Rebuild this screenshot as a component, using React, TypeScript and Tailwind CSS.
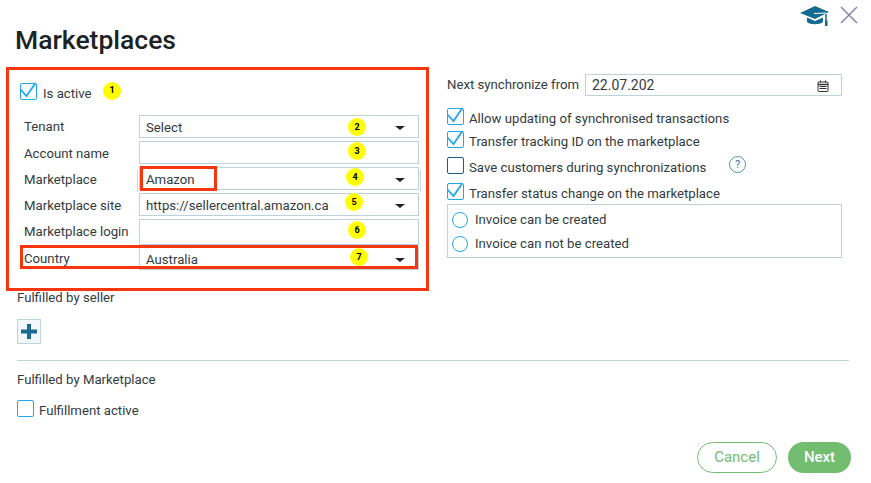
function Check({ checked = true, dark = false }: { checked?: boolean; dark?: boolean }) {
  return (
    <span className={`relative block w-[17px] h-[17px] flex-shrink-0 rounded-[2px] border-[1.5px] ${dark ? 'border-[#1d5f80]' : 'border-[#1fa8ee]'}`}>
      {checked && (
        <svg className="absolute left-[-2px] top-[-2px] overflow-visible" width="17" height="17" viewBox="0 0 17 17" fill="none">
          <path d="M1.5 7.500L7.500 14L16.500 1" stroke="#1fa8ee" strokeWidth="1.8" />
        </svg>
      )}
    </span>
  )
}

function Badge({ n, className }: { n: number; className: string }) {
  return (
    <span className={`absolute w-[18px] h-[18px] rounded-full bg-[#ffff00] text-[9px] font-bold text-black flex items-center justify-center ${className}`}>
      {n}
    </span>
  )
}

function Caret() {
  return <span className="absolute right-[13px] top-[10px] w-0 h-0 border-x-[5px] border-x-transparent border-t-[4px] border-t-[#222]" />
}

function Row({ label, value, caret, children, labelClass = 'mt-[2px]', className = '', inputClass = '' }: { label: string; value?: string; caret?: boolean; children?: React.ReactNode; labelClass?: string; className?: string; inputClass?: string }) {
  return (
    <div className={`flex h-[23px] pl-[6px] ${className}`}>
      <span className={`w-[115px] flex-shrink-0 leading-[22px] ${labelClass}`}>{label}</span>
      <div className={`relative w-[280px] h-[23px] flex-shrink-0 border border-[#bcd3de] px-[6px] leading-[23px] ${inputClass}`}>
        {value}
        {caret && <Caret />}
        {children}
      </div>
    </div>
  )
}

function CheckRow({ label, checked = true, dark = false, className = '' }: { label: string; checked?: boolean; dark?: boolean; className?: string }) {
  return (
    <label className={`flex items-center gap-[5px] h-[17px] ${className}`}>
      <Check checked={checked} dark={dark} />
      <span className="whitespace-nowrap mt-[5px]">{label}</span>
    </label>
  )
}

function Radio({ label }: { label: string }) {
  return (
    <label className="flex items-center gap-[7px] h-[17px] pl-[4px]">
      <span className="block w-[16px] h-[16px] rounded-full border-[1.5px] border-[#1fa8ee]" />
      <span>{label}</span>
    </label>
  )
}

export default function App() {
  return (
    <div className="relative w-[871px] h-[483px] overflow-hidden bg-white px-[17px] text-[13.2px] text-[#333b40] font-['Roboto',sans-serif]">
      <div className="flex justify-end items-center gap-[10px] h-[25px] pt-[5px] -mr-[4px]">
        <svg width="30" height="21" viewBox="0 0 30 21">
          <path d="M0 8L15 1L29 7L15 14Z" fill="#136b8e" />
          <path d="M7 12.500L15 16L23 12.500V17C20 20 10 20 7 17Z" fill="#136b8e" />
          <path d="M14 8.500L26 8V13" fill="none" stroke="#fff" strokeWidth="1" />
          <path d="M26 9V16" stroke="#136b8e" strokeWidth="1.500" />
          <rect x="25" y="15.500" width="2.500" height="5.500" fill="#136b8e" />
        </svg>
        <svg width="18" height="18" viewBox="0 0 18 18" fill="none">
          <path d="M1 1L17 17M17 1L1 17" stroke="#7c8aa8" strokeWidth="1.5" />
        </svg>
      </div>
      <h1 className="text-[26.5px] leading-[30px] font-medium text-[#1b2326] -ml-[2px]">Marketplaces</h1>

      <div className="flex mt-[12px]">
        <div className="relative -ml-[11px] w-[423px] h-[224px] border-[3px] border-[#f5360f] flex-shrink-0 pl-[11px] pt-[13px]">
          <div className="relative">
            <CheckRow label="Is active" className="gap-[6px]" />
            <Badge n={1} className="left-[83px] -top-[1px]" />
          </div>
          <div className="flex flex-col gap-[3px] mt-[15px] -ml-[2px] relative">
            <Row label="Tenant" value="Select" caret labelClass="mt-[1px]">
              <Badge n={2} className="left-[208px] top-[2px]" />
            </Row>
            <Row label="Account name">
              <Badge n={3} className="left-[208px] top-0" />
            </Row>
            <Row label="Marketplace" value="Amazon" caret>
              <Badge n={4} className="left-[206px] top-0" />
              <span className="absolute -left-[3px] top-[2px] h-[22px] w-px bg-[#ccd8de]" />
              <span className="absolute -right-[3px] top-[2px] h-[22px] w-px bg-[#ccd8de]" />
              <span className="absolute left-0 -top-[2px] w-[77px] h-[25px] border-[3px] border-[#f5360f]" />
            </Row>
            <Row label="Marketplace site" value="https://sellercentral.amazon.ca" caret>
              <Badge n={5} className="left-[205px] -top-[1px]" />
            </Row>
            <Row label="Marketplace login" inputClass="h-[26px]">
              <Badge n={6} className="left-[208px] top-[1px]" />
            </Row>
            <Row label="Country" value="Australia" caret labelClass="mt-[1px]" className="mt-[2px] z-10">
              <Badge n={7} className="left-[210px] top-0" />
              <span className="absolute -left-[120px] -top-[3px] w-[398px] h-[24px] border-[3px] border-[#f5360f]" />
            </Row>
          </div>
        </div>

        <div className="ml-[18px] w-[395px] pt-[7px]">
          <div className="flex items-center h-[22px]">
            <span className="w-[138px]">Next synchronize from</span>
            <div className="relative w-[257px] h-[22px] border border-[#bcd3de] pl-[6px] text-[14px] leading-[20px]">
              22.07.202
              <svg className="absolute right-[12px] top-[5px]" width="12" height="12" viewBox="0 0 12 12" fill="none">
                <rect x="1" y="2" width="10" height="9.5" rx="1" stroke="#333" />
                <path d="M1 4.500H11" stroke="#333" strokeWidth="1.500" />
                <path d="M3.500 0.500V2.500M8.500 0.500V2.500M2.500 6.500H9.500M2.500 8.500H9.500" stroke="#333" />
              </svg>
            </div>
          </div>
          <CheckRow label="Allow updating of synchronised transactions" className="mt-[12px]" />
          <CheckRow label="Transfer tracking ID on the marketplace" className="mt-[6px]" />
          <div className="relative mt-[9px]">
            <CheckRow label="Save customers during synchronizations" checked={false} dark />
            <span className="absolute left-[282px] -top-[1px] w-[17px] h-[17px] rounded-full border border-[#4f93b3] text-[#2f7a9e] text-[11px] leading-[15px] text-center">?</span>
          </div>
          <CheckRow label="Transfer status change on the marketplace" className="mt-[9px]" />
          <div className="mt-[4px] h-[54px] border border-[#bcd3de] flex flex-col gap-[7px] pt-[6px]">
            <Radio label="Invoice can be created" />
            <Radio label="Invoice can not be created" />
          </div>
        </div>
      </div>

      <p className="-mt-px leading-[15px]">Fulfilled by seller</p>
      <button className="mt-[14px] block w-[24px] h-[25px] border border-[#bcd3de] bg-[#f3f7f9] p-[3px]">
        <svg width="16" height="17" viewBox="0 0 16 17">
          <path d="M8 1V16M0 8.500H16" stroke="#1a6b8f" strokeWidth="4" />
        </svg>
      </button>
      <div className="mt-[16px] w-[832px] h-px bg-[#bcd3de]" />
      <p className="mt-[11px] leading-[15px]">Fulfilled by Marketplace</p>
      <CheckRow label="Fulfillment active" checked={false} className="mt-[13px]" />

      <div className="flex justify-end gap-[11px] w-[834px] mt-[25px]">
        <button className="w-[80px] h-[31px] rounded-full border border-[#72bd6f] text-[#72bd6f] text-[15px]">Cancel</button>
        <button className="w-[63px] h-[31px] rounded-full bg-[#72bd6f] text-white text-[15px] font-medium">Next</button>
      </div>
    </div>
  )
}
